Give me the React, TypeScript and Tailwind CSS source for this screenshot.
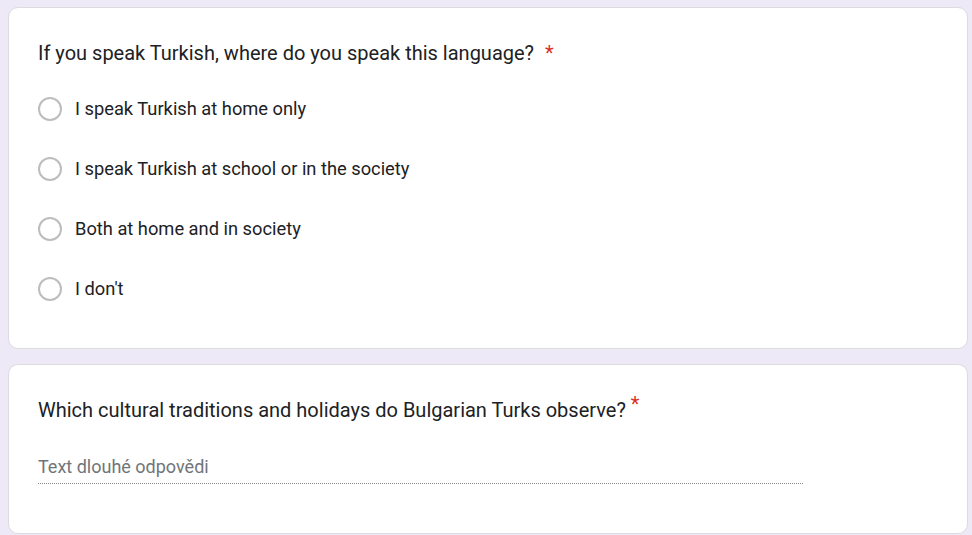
export default function App() {
  const options = [
    "I speak Turkish at home only",
    "I speak Turkish at school or in the society",
    "Both at home and in society",
    "I don't",
  ];

  return (
    <div className="min-h-[535px] bg-[#ede9f6] pt-[7px] pl-[8px] pr-[4px] font-['Roboto',sans-serif]">
      {/* Multiple choice question */}
      <div className="h-[342px] rounded-[10px] border border-[#dadce0] bg-white pl-[29px] pt-[31px]">
        <div className="flex items-start text-[20px] leading-[28px] text-[#202124]">
          <span>If you speak Turkish, where do you speak this language?</span>
          <span className="ml-[11px] text-[#d93025]">*</span>
        </div>
        <div className="mt-[12px] flex flex-col">
          {options.map((o) => (
            <label key={o} className="flex h-[60px] items-center">
              <span className="h-[24px] w-[24px] rounded-full border-2 border-[#bdbdbd]" />
              <span className="ml-[13px] text-[18.3px] text-[#202124]">{o}</span>
            </label>
          ))}
        </div>
      </div>

      {/* Long answer question */}
      <div className="mt-[15px] h-[170px] rounded-[10px] border border-[#dadce0] bg-white pl-[29px] pt-[31px]">
        <div className="flex items-start text-[20px] leading-[28px] text-[#202124]">
          <span>Which cultural traditions and holidays do Bulgarian Turks observe?</span>
          <span className="ml-[5px] -mt-[6px] text-[#d93025]">*</span>
        </div>
        <div className="mt-[29px] w-[765px] border-b border-dotted border-[#8a8a8a] pb-[3px] text-[18px] text-[#70757a]">
          Text dlouhé odpovědi
        </div>
      </div>
    </div>
  );
}
